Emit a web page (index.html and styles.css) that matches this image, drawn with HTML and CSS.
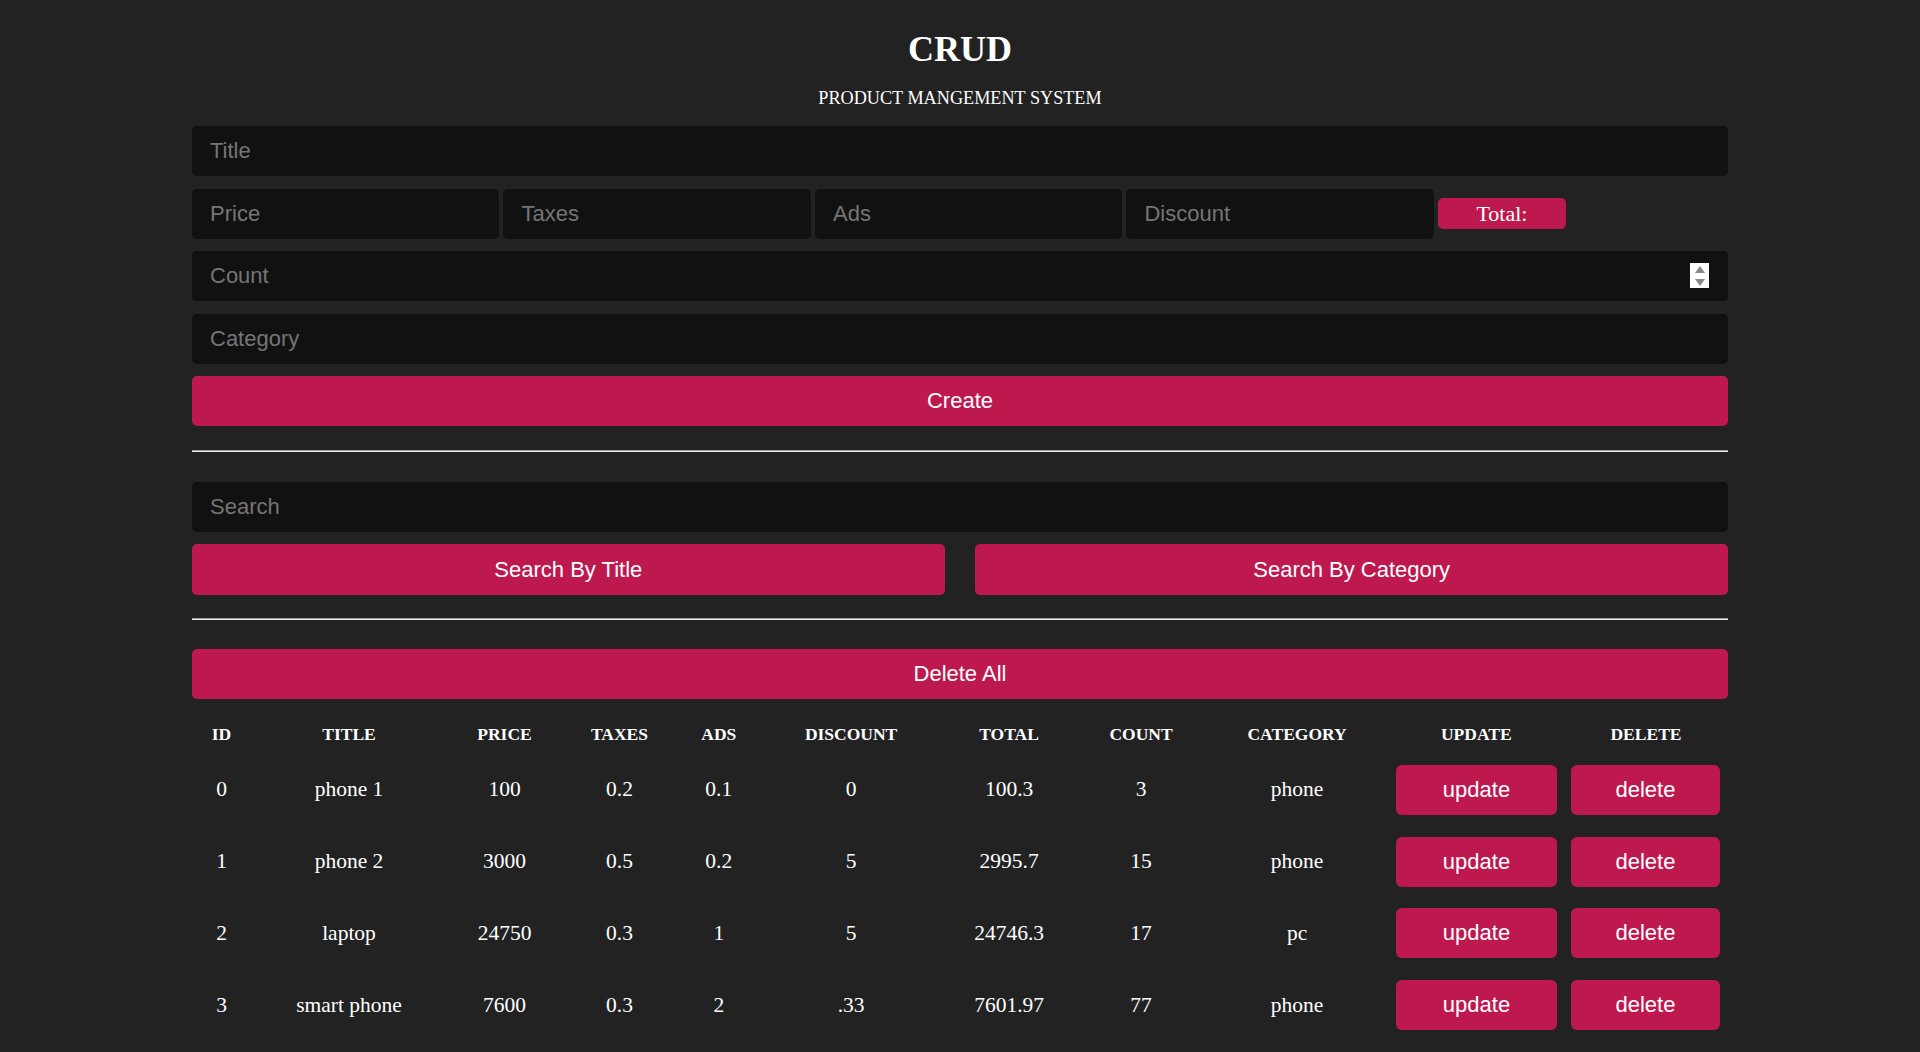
FILE: index.html
```html
<!DOCTYPE html>
<html lang="en">
<head>
<meta charset="UTF-8">
<title>CRUD</title>
<link rel="stylesheet" href="styles.css">
</head>
<body>
<div class="crud">
  <header class="head">
    <h1 class="head-title">CRUD</h1>
    <p class="head-sub">PRODUCT MANGEMENT SYSTEM</p>
  </header>

  <div class="inputs">
    <input class="field" type="text" placeholder="Title">
    <div class="price">
      <input class="field field-price" type="text" placeholder="Price">
      <input class="field field-price" type="text" placeholder="Taxes">
      <input class="field field-price" type="text" placeholder="Ads">
      <input class="field field-price" type="text" placeholder="Discount">
      <small class="total">Total:</small>
    </div>
    <div class="count-wrap">
      <input class="field field-count" type="text" placeholder="Count">
      <span class="spinner"><span class="spin-up"></span><span class="spin-down"></span></span>
    </div>
    <input class="field" type="text" placeholder="Category">
    <button class="btn">Create</button>
  </div>

  <hr class="sep sep-first">

  <div class="search-block">
    <input class="field" type="text" placeholder="Search">
    <div class="btn-search-row">
      <button class="btn btn-half">Search By Title</button>
      <button class="btn btn-half">Search By Category</button>
    </div>
  </div>

  <hr class="sep sep-second">

  <button class="btn">Delete All</button>

  <table class="products">
    <colgroup>
      <col style="width:59px">
      <col style="width:196px">
      <col style="width:115px">
      <col style="width:115px">
      <col style="width:83.6px">
      <col style="width:181px">
      <col style="width:135px">
      <col style="width:129px">
      <col style="width:183px">
      <col style="width:175.4px">
      <col style="width:164px">
    </colgroup>
    <thead>
      <tr>
        <th>ID</th><th>TITLE</th><th>PRICE</th><th>TAXES</th><th>ADS</th><th>DISCOUNT</th><th>TOTAL</th><th>COUNT</th><th>CATEGORY</th><th>UPDATE</th><th>DELETE</th>
      </tr>
    </thead>
    <tbody>
      <tr>
        <td>0</td><td>phone 1</td><td>100</td><td>0.2</td><td>0.1</td><td>0</td><td>100.3</td><td>3</td><td>phone</td>
        <td class="cell-btn"><button class="btn btn-row">update</button></td>
        <td class="cell-btn cell-del"><button class="btn btn-row">delete</button></td>
      </tr>
      <tr>
        <td>1</td><td>phone 2</td><td>3000</td><td>0.5</td><td>0.2</td><td>5</td><td>2995.7</td><td>15</td><td>phone</td>
        <td class="cell-btn"><button class="btn btn-row">update</button></td>
        <td class="cell-btn cell-del"><button class="btn btn-row">delete</button></td>
      </tr>
      <tr>
        <td>2</td><td>laptop</td><td>24750</td><td>0.3</td><td>1</td><td>5</td><td>24746.3</td><td>17</td><td>pc</td>
        <td class="cell-btn"><button class="btn btn-row">update</button></td>
        <td class="cell-btn cell-del"><button class="btn btn-row">delete</button></td>
      </tr>
      <tr>
        <td>3</td><td>smart phone</td><td>7600</td><td>0.3</td><td>2</td><td>.33</td><td>7601.97</td><td>77</td><td>phone</td>
        <td class="cell-btn"><button class="btn btn-row">update</button></td>
        <td class="cell-btn cell-del"><button class="btn btn-row">delete</button></td>
      </tr>
    </tbody>
  </table>
</div>
</body>
</html>
```

FILE: styles.css
```css
* {
  box-sizing: border-box;
}

body {
  margin: 0;
  background: #222222;
  color: #ffffff;
  font-family: "Liberation Serif", "Times New Roman", serif;
}

.crud {
  width: 80%;
  margin: 0 auto;
}

.head {
  padding-top: 29px;
  text-align: center;
}

.head-title {
  margin: 0;
  font-size: 36px;
  line-height: 40px;
  font-weight: bold;
}

.head-sub {
  margin: 17.5px 0;
  font-size: 18.2px;
  line-height: 22px;
}

.inputs {
  display: flex;
  flex-direction: column;
  gap: 12.5px;
}

.field {
  display: block;
  width: 100%;
  height: 50px;
  border: none;
  outline: none;
  background: #111111;
  border-radius: 5px;
  padding: 0 18px;
  color: #ffffff;
  font-family: "Liberation Sans", Arial, sans-serif;
  font-size: 22px;
}

.field::placeholder {
  color: #757575;
}

.price {
  display: flex;
  align-items: center;
  gap: 4.3px;
}

.field-price {
  width: 20%;
  flex: none;
}

.total {
  width: 128px;
  height: 31px;
  display: flex;
  align-items: center;
  justify-content: center;
  background: #be194f;
  border-radius: 5px;
  font-size: 22px;
  font-family: "Liberation Serif", "Times New Roman", serif;
}

.count-wrap {
  position: relative;
}

.spinner {
  position: absolute;
  right: 19px;
  top: 12px;
  width: 19px;
  height: 25px;
  background: #ffffff;
  display: flex;
  flex-direction: column;
  align-items: center;
  justify-content: space-between;
  padding: 3px 0 2px;
}

.spin-up {
  width: 0;
  height: 0;
  border-left: 5px solid transparent;
  border-right: 5px solid transparent;
  border-bottom: 7px solid #8a8a8a;
}

.spin-down {
  width: 0;
  height: 0;
  border-left: 5px solid transparent;
  border-right: 5px solid transparent;
  border-top: 7px solid #8a8a8a;
}

.btn {
  display: block;
  width: 100%;
  height: 50px;
  border: none;
  border-radius: 5px;
  background: #be194f;
  color: #ffffff;
  font-family: "Liberation Sans", Arial, sans-serif;
  font-size: 22px;
  cursor: pointer;
}

.sep {
  border: none;
  border-top: 1px solid #9a9a9a;
  border-bottom: 1px solid #eeeeee;
  height: 0;
}

.sep-first {
  margin: 24px 0 30px;
}

.sep-second {
  margin: 23px 0 29px;
}

.search-block {
  display: flex;
  flex-direction: column;
  gap: 12px;
}

.btn-search-row {
  display: flex;
  justify-content: space-between;
}

.btn-half {
  width: 49%;
  height: 51px;
}

.products {
  width: 100%;
  margin-top: 15px;
  border-collapse: collapse;
  table-layout: fixed;
  text-align: center;
}

.products th {
  height: 40px;
  padding: 0;
  font-size: 17.5px;
  font-weight: bold;
  text-transform: uppercase;
}

.products td {
  height: 71.8px;
  padding: 0;
  font-size: 21.5px;
}

.products td.cell-btn {
  padding: 0 7px 0 7.4px;
}

.products td.cell-del {
  padding: 0 8px 0 7px;
}

.btn-row {
  height: 50px;
  border-radius: 6px;
}
```
